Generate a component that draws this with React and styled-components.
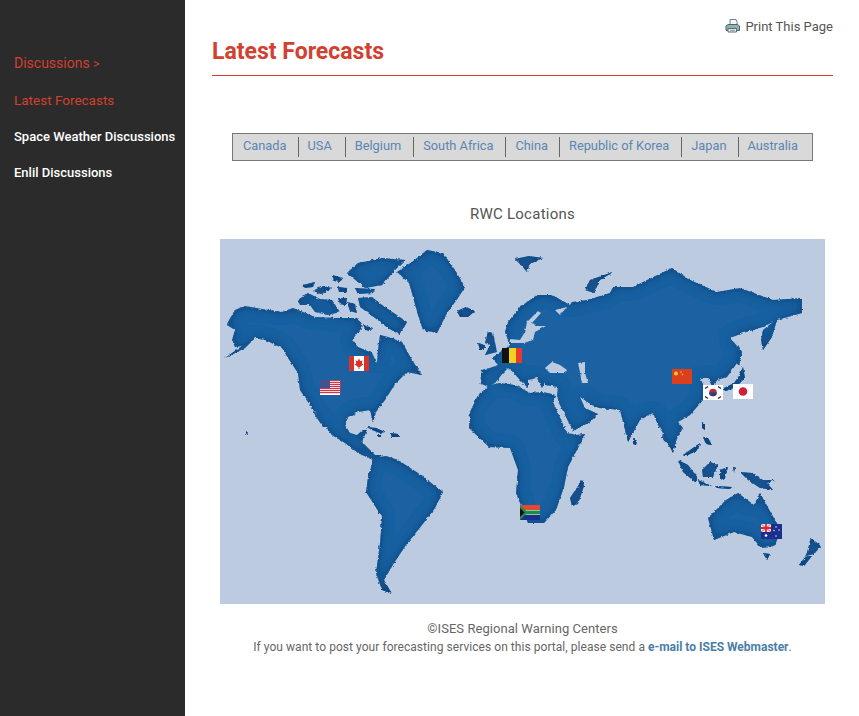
import React from "react";
import styled, { createGlobalStyle } from "styled-components";

const GlobalStyle = createGlobalStyle`
  html, body {
    margin: 0;
    padding: 0;
    background: #fff;
    font-family: Roboto, "Liberation Sans", sans-serif;
  }
`;

const Page = styled.div`
  display: flex;
  width: 859px;
  height: 716px;
  overflow: hidden;
`;

const Sidebar = styled.nav`
  width: 185px;
  flex: none;
  background-color: #2b2b2b;
  padding: 55px 0 0 14px;
  box-sizing: border-box;
`;

const SideHead = styled.a`
  display: block;
  height: 18px;
  line-height: 16px;
  margin-bottom: 18px;
  font-size: 14px;
  color: #d2402f;
  white-space: nowrap;

  small {
    font-size: 12px;
  }
`;

const SideLink = styled.a`
  display: block;
  height: 18px;
  line-height: 18px;
  margin-bottom: ${(props) => (props.$active ? "19px" : "18px")};
  font-size: ${(props) => (props.$active ? "13.5px" : "13px")};
  font-weight: ${(props) => (props.$active ? 400 : 500)};
  color: ${(props) => (props.$active ? "#d2402f" : "#fff")};
  white-space: nowrap;
`;

const Main = styled.main`
  flex: 1;
  padding: 17px 26px 0 27px;
  color: #555;
`;

const PrintRow = styled.div`
  display: flex;
  justify-content: flex-end;
  align-items: center;
  gap: 5px;
  height: 18px;
  font-size: 13px;
  color: #555;
`;

const Title = styled.h1`
  margin: 1px 0 0;
  height: 39px;
  line-height: 32px;
  font-size: 23px;
  font-weight: 700;
  color: #d2402f;
  border-bottom: 1px solid #d2402f;
`;

const CountryBar = styled.div`
  display: flex;
  width: 581px;
  height: 28px;
  box-sizing: border-box;
  margin: 57px auto 0;
  padding: 3px 0;
  background-color: #d9d9d9;
  border: 1px solid #777;
`;

const Country = styled.a`
  display: block;
  line-height: 18px;
  padding: 0 ${(props) => props.$right}px 0 ${(props) => (props.$first ? 10 : 9)}px;
  font-size: 12.8px;
  color: #5a86b4;
  border-left: ${(props) => (props.$first ? "none" : "1px solid #666")};
  white-space: nowrap;
`;

const MapTitle = styled.h2`
  margin: 44px 0 0;
  height: 18px;
  line-height: 18px;
  font-size: 15px;
  font-weight: 400;
  letter-spacing: 0.25px;
  text-align: center;
  color: #555;
`;

const WorldMap = styled.svg`
  display: block;
  width: 605px;
  height: 365px;
  margin: 16px auto 0;
`;

const Footer = styled.footer`
  margin-top: 15px;
  font-size: 12px;
  line-height: 19px;
  letter-spacing: 0.05px;
  text-align: center;
  color: #666;
`;

const Credit = styled.div`
  font-size: 13px;
`;

const MailLink = styled.a`
  font-weight: 700;
  letter-spacing: 0;
  color: #4a7ea8;
`;

const countries = [
  { name: "Canada", right: 11 },
  { name: "USA", right: 13 },
  { name: "Belgium", right: 12 },
  { name: "South Africa", right: 12 },
  { name: "China", right: 11 },
  { name: "Republic of Korea", right: 12 },
  { name: "Japan", right: 11 },
  { name: "Australia", right: 9 },
];

// land outlines, in page coordinates (the svg viewBox starts at 220,239)
const land = [
  // North + Central America
  "M228,322 235,310 245,306 262,309 282,312 293,308 315,317 338,318 357,318 363,327 358,332 352,340 358,347 372,353 377,363 378,350 380,335 392,338 402,342 412,360 422,375 407,372 397,382 395,384 385,400 376,412 373,422 370,410 358,412 348,417 345,425 350,433 357,435 363,430 367,430 362,442 370,450 375,455 382,455 375,461 358,453 345,443 332,435 312,408 300,390 298,373 288,358 282,348 265,340 255,338 245,348 225,358 242,346 235,347 232,340 235,330 227,325Z",
  // Baja
  "M313,410 327,427 323,427 315,415Z",
  // South America
  "M374,458 386,456 398,460 418,473 430,482 443,492 435,508 422,525 406,545 394,563 384,580 392,594 382,590 376,573 380,543 382,517 366,492 368,477Z",
  // Greenland
  "M397,272 412,262 427,250 443,253 455,270 465,287 458,298 447,313 437,333 423,330 418,315 413,297 409,283Z",
  // Iceland
  "M457,311 466,307 475,311 468,317 460,317Z",
  // Arctic islands
  "M347,273 358,263 382,258 405,260 395,270 382,285 365,288 353,278Z",
  "M358,298 372,297 382,305 407,322 400,335 388,328 375,318 360,307Z",
  "M298,300 308,293 320,299 332,300 340,312 328,315 315,312 310,305 300,305Z",
  "M303,285 315,282 313,287 305,288Z",
  "M313,291 322,286 332,288 322,294 316,293Z",
  "M332,275 343,278 340,282 334,281Z",
  "M338,287 347,288 346,292 339,292Z",
  "M338,298 347,298 346,305 340,304Z",
  "M347,302 355,304 357,313 350,311Z",
  "M355,288 375,289 373,293 358,294Z",
  "M363,325 373,328 370,331 365,330Z",
  // Cuba, Jamaica, Hispaniola
  "M367,427 376,428 385,432 380,433 372,430Z",
  "M378,435 381,435 381,437 378,437Z",
  "M390,433 398,434 400,437 392,437Z",
  // Hawaii
  "M246,431 248,433 246,435Z",
  // Africa
  "M469,428 470,412 478,395 490,385 500,383 515,385 530,393 543,392 556,395 553,402 567,433 576,435 585,434 578,448 568,467 564,487 556,510 544,523 528,523 516,493 518,470 510,448 489,447Z",
  // Madagascar
  "M582,480 584,486 578,504 572,506 570,498Z",
  // Eurasia
  "M482,370 490,368 498,365 492,358 510,345 505,332 508,322 520,307 537,295 552,295 570,305 572,302 587,300 610,293 613,287 633,287 643,282 672,268 690,280 717,292 740,288 773,300 802,298 802,313 777,320 772,337 763,350 761,340 763,330 773,322 763,327 743,333 730,338 738,347 737,363 727,377 717,380 713,388 708,378 700,378 706,390 703,400 690,415 678,422 683,428 677,438 673,453 670,447 662,438 663,433 658,425 653,413 640,420 628,442 620,410 599,408 592,405 580,397 585,408 598,414 590,422 573,431 559,403 557,396 558,387 545,385 545,382 542,388 537,378 528,380 528,388 520,380 513,372 508,368 503,373 495,383 488,387 480,383Z",
  // Britain, Ireland
  "M488,332 493,333 497,352 485,355 490,345 485,343Z",
  "M478,343 485,345 485,350 480,350Z",
  // Sakhalin, Japan
  "M738,345 742,352 739,366 736,362Z",
  "M743,367 745,378 736,387 726,391 722,389 734,383 739,376Z",
  // Svalbard, Novaya Zemlya
  "M515,259 529,256 543,258 530,264 527,272 522,266Z",
  "M585,290 590,280 613,272 600,280 594,293Z",
  // Sri Lanka, Philippines, Hainan strip
  "M633,438 637,441 636,445 633,444Z",
  "M702,422 705,424 705,430 702,428Z",
  "M703,437 708,438 712,445 706,444Z",
  "M683,455 700,443 698,450 688,455Z",
  // Indonesia
  "M678,460 688,465 698,478 695,482 683,472Z",
  "M698,480 712,486 700,485Z",
  "M715,486 732,487 730,489 717,488Z",
  "M702,470 710,462 718,465 713,477 703,477Z",
  "M720,470 728,467 725,478 720,480Z",
  "M733,467 735,468 734,472Z",
  "M740,472 752,473 763,480 775,480 767,483 773,490 760,488 748,480Z",
  // Australia
  "M708,518 726,500 738,493 754,505 760,493 771,513 781,530 775,545 771,547 761,548 752,537 734,532 714,540Z",
  "M763,553 770,554 767,560Z",
  // New Zealand
  "M811,538 821,546 814,554 806,556Z",
  "M806,556 799,565 804,566 812,556Z",
];

// inland seas that cut through the land above
const seas = [
  "M538,311 541,313 532,323 535,326 546,326 535,332 533,340 524,343 511,343 510,339 520,340 525,332 527,322Z",
  "M555,310 567,307 560,315Z",
  "M545,368 552,362 560,365 567,370 565,373 550,373Z",
  "M578,363 585,362 585,373 588,383 582,383 580,372Z",
];

function Flag({ x, y, children }) {
  return (
    <g transform={`translate(${x},${y})`}>
      <rect width="20" height="15" fill="#fff" />
      {children}
    </g>
  );
}

function PrinterIcon() {
  return (
    <svg width="15" height="14" viewBox="0 0 15 14">
      <path d="M5 .5h6l1 2v4H5z" fill="#f4f7f6" stroke="#6f8088" />
      <path d="M1 7 3 5.500h9.500L14.500 7v4.500H1z" fill="#8fb0b4" stroke="#4e666e" />
      <path d="M3 9.500h8.500v3.500H3z" fill="#eaf0f0" stroke="#5c6e76" />
      <path d="M5 11.300h5" stroke="#8a9aa0" />
    </svg>
  );
}

function App() {
  return (
    <Page>
      <GlobalStyle />
      <Sidebar>
        <SideHead>Discussions <small>&gt;</small></SideHead>
        <SideLink $active>Latest Forecasts</SideLink>
        <SideLink>Space Weather Discussions</SideLink>
        <SideLink>Enlil Discussions</SideLink>
      </Sidebar>
      <Main>
        <PrintRow>
          <PrinterIcon />
          Print This Page
        </PrintRow>
        <Title>Latest Forecasts</Title>
        <CountryBar>
          {countries.map((c, i) => (
            <Country key={c.name} $first={i === 0} $right={c.right}>
              {c.name}
            </Country>
          ))}
        </CountryBar>
        <MapTitle>RWC Locations</MapTitle>
        <WorldMap viewBox="220 239 605 365">
          <defs>
            <filter id="landFx" filterUnits="userSpaceOnUse" x="220" y="239" width="605" height="365">
              <feTurbulence type="fractalNoise" baseFrequency="0.35" numOctaves="2" seed="4" result="noise" />
              <feDisplacementMap in="SourceGraphic" in2="noise" scale="3" xChannelSelector="R" yChannelSelector="G" result="rough" />
              <feGaussianBlur in="rough" stdDeviation="0.35" result="soft" />
              <feGaussianBlur in="soft" stdDeviation="6" result="blurred" />
              <feFlood floodColor="#0e3f78" result="edge" />
              <feComposite in="edge" in2="blurred" operator="out" result="inner" />
              <feComposite in="inner" in2="soft" operator="in" result="shade" />
              <feMerge>
                <feMergeNode in="soft" />
                <feMergeNode in="shade" />
              </feMerge>
            </filter>
            <filter id="seaFx" filterUnits="userSpaceOnUse" x="220" y="239" width="605" height="365">
              <feTurbulence type="fractalNoise" baseFrequency="0.3" numOctaves="2" seed="9" result="noise" />
              <feDisplacementMap in="SourceGraphic" in2="noise" scale="2.5" xChannelSelector="R" yChannelSelector="G" />
            </filter>
          </defs>
          <rect x="220" y="239" width="605" height="365" fill="#bdcbe0" />
          <g filter="url(#landFx)" fill="#1a62a3">
            {land.map((d) => (
              <path key={d} d={d} />
            ))}
          </g>
          <g filter="url(#seaFx)" fill="#bdcbe0">
            {seas.map((d) => (
              <path key={d} d={d} />
            ))}
          </g>

          {/* Canada */}
          <Flag x={349} y={356}>
            <rect width="5" height="15" fill="#d9342b" />
            <rect x="15" width="5" height="15" fill="#d9342b" />
            <path d="M10 2.500 11.300 5 13.500 4.500 12.800 7.500 14.500 8.300 11 11H10.500V13H9.500V11H9L5.500 8.300 7.200 7.500 6.500 4.500 8.700 5Z" fill="#d9342b" />
          </Flag>
          {/* USA */}
          <Flag x={320} y={380}>
            {[0, 2, 4, 6, 8, 10, 12].map((y) => (
              <rect key={y} y={y} width="21" height="1.200" fill="#c8384a" />
            ))}
            <rect width="10" height="8" fill="#44508f" />
          </Flag>
          {/* Belgium */}
          <Flag x={502} y={348}>
            <rect width="7" height="15" fill="#111" />
            <rect x="7" width="7" height="15" fill="#f5d020" />
            <rect x="14" width="6" height="15" fill="#e8392f" />
          </Flag>
          {/* China */}
          <Flag x={672} y={369}>
            <rect width="20" height="15" fill="#dc3f1c" />
            <circle cx="4" cy="4.500" r="2" fill="#f5c82a" />
            <circle cx="9" cy="3" r="0.800" fill="#f5c82a" />
            <circle cx="10.500" cy="5.500" r="0.800" fill="#f5c82a" />
          </Flag>
          {/* Korea */}
          <Flag x={703} y={385}>
            <circle cx="10" cy="7.500" r="3.800" fill="#b32c44" />
            <path d="M6.200 7.500a3.800 3.800 0 0 0 7.600 0z" fill="#2b3f83" />
            <path d="M2 3.500 5 1.500M15 1.500 18 3.500M2 11.500 5 13.500M15 13.500 18 11.500" stroke="#333" strokeWidth="1.500" />
          </Flag>
          {/* Japan */}
          <Flag x={733} y={384}>
            <circle cx="10" cy="7.500" r="4.300" fill="#cf2239" />
          </Flag>
          {/* South Africa */}
          <Flag x={520} y={505}>
            <rect width="20" height="5" fill="#e2492f" />
            <rect y="10" width="20" height="5" fill="#1c2f8e" />
            <rect y="5.500" width="20" height="4" fill="#1f8a4c" />
            <path d="M0 0 8 7.500 0 15Z" fill="#1f8a4c" />
            <path d="M0 3 4.500 7.500 0 12Z" fill="#111" />
          </Flag>
          {/* Australia */}
          <Flag x={761} y={524}>
            <rect width="21" height="15" fill="#1b2f8f" />
            <rect width="10" height="8" fill="#f3e3e3" />
            <path d="M5 0V8M0 4H10" stroke="#d6283a" strokeWidth="1.800" />
            <path d="M0 0 10 8M10 0 0 8" stroke="#d6283a" strokeWidth="0.700" />
            <circle cx="5" cy="11.500" r="1.300" fill="#fff" />
            <circle cx="15" cy="3" r="0.700" fill="#fff" />
            <circle cx="18" cy="6" r="0.700" fill="#fff" />
            <circle cx="15" cy="12" r="0.700" fill="#fff" />
            <circle cx="13" cy="6.500" r="0.700" fill="#fff" />
          </Flag>
        </WorldMap>
        <Footer>
          <Credit>©ISES Regional Warning Centers</Credit>
          If you want to post your forecasting services on this portal, please send a{" "}
          <MailLink>e-mail to ISES Webmaster</MailLink>.
        </Footer>
      </Main>
    </Page>
  );
}

export default App;
